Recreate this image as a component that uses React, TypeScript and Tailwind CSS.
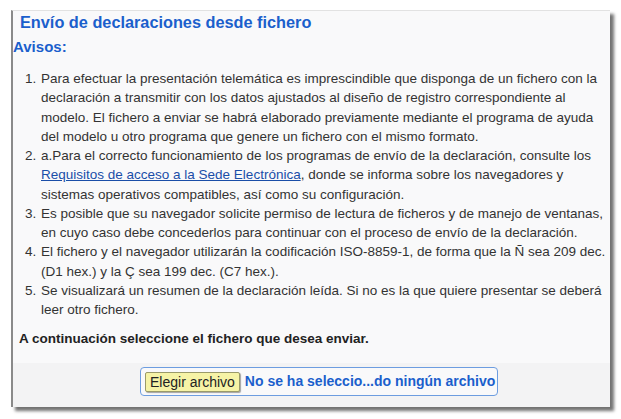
const avisos: React.ReactNode[] = [
  'Para efectuar la presentación telemática es imprescindible que disponga de un fichero con la declaración a transmitir con los datos ajustados al diseño de registro correspondiente al modelo. El fichero a enviar se habrá elaborado previamente mediante el programa de ayuda del modelo u otro programa que genere un fichero con el mismo formato.',
  <>
    a.Para el correcto funcionamiento de los programas de envío de la declaración, consulte los{' '}
    <a href="#" className="text-[#1a4ea8] underline">Requisitos de acceso a la Sede Electrónica</a>, donde se
    informa sobre los navegadores y sistemas operativos compatibles, así como su configuración.
  </>,
  'Es posible que su navegador solicite permiso de lectura de ficheros y de manejo de ventanas, en cuyo caso debe concederlos para continuar con el proceso de envío de la declaración.',
  'El fichero y el navegador utilizarán la codificación ISO-8859-1, de forma que la Ñ sea 209 dec. (D1 hex.) y la Ç sea 199 dec. (C7 hex.).',
  'Se visualizará un resumen de la declaración leída. Si no es la que quiere presentar se deberá leer otro fichero.',
]

export default function App() {
  return (
    <div className="w-[621px] h-[419px] bg-white pt-[10px] pl-[11px] font-['Liberation_Sans',Arial,sans-serif]">
      <div className="w-[599px] h-[397px] bg-[#f9f9fa] border-l-2 border-l-[#8a8a8a] border-t border-t-[#e2e2e2] shadow-[4px_4px_3px_rgba(0,0,0,0.55)] flex flex-col">
        <h1 className="text-[16.3px] leading-[20px] font-bold text-[#1b5fcc] pl-[7px] pt-[1px]">
          Envío de declaraciones desde fichero
        </h1>
        <h2 className="text-[15px] leading-[18px] font-bold text-[#1b5fcc] mt-[6px]">Avisos:</h2>

        <ol className="list-decimal pl-[27px] pr-[4px] mt-[13px] text-[13.5px] leading-[19.25px] text-[#333]">
          {avisos.map((a, i) => (
            <li key={i} className="pl-[1px]">{a}</li>
          ))}
        </ol>

        <p className="mt-[11px] pl-[6px] text-[13.5px] leading-[18px] font-bold text-[#222]">
          A continuación seleccione el fichero que desea enviar.
        </p>

        <div className="mt-auto h-[44px] bg-[#f3f3f4] pl-[127px] pt-[4px]">
          <div className="flex items-center gap-[5px] h-[29px] w-[358px] border border-[#6d9de0] rounded-[4px] bg-[#f9f9fa] px-[4px] whitespace-nowrap">
            <span className="bg-[#f6f3a6] border border-[#9a9a6a] rounded-[2px] shadow-[1px_1px_1px_rgba(0,0,0,0.35)] px-[4px] h-[20px] leading-[18px] text-[14px] text-[#222]">
              Elegir archivo
            </span>
            <span className="text-[14px] font-bold text-[#1b5fcc]">No se ha seleccio...do ningún archivo</span>
          </div>
        </div>
      </div>
    </div>
  )
}
